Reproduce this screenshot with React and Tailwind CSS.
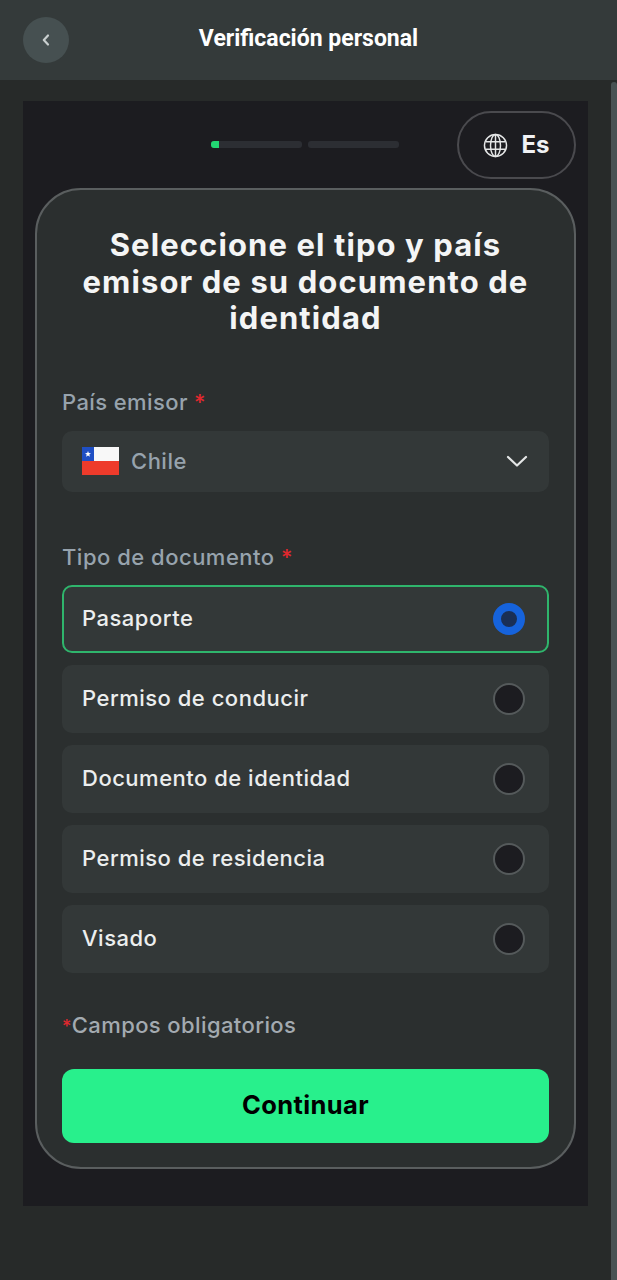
import React from 'react';

const docs = ['Pasaporte', 'Permiso de conducir', 'Documento de identidad', 'Permiso de residencia', 'Visado'];

function ChileFlag() {
  return (
    <svg width="37" height="28" viewBox="0 0 37 28" className="shrink-0">
      <rect width="37" height="14" fill="#f8f8f8" />
      <rect y="14" width="37" height="14" fill="#ee3b2b" />
      <rect width="12" height="14" fill="#1f4fc4" />
      <path d="M6 4l.8 2.1 2.2.1-1.7 1.4.6 2.1L6 8.6l-1.9 1.1.6-2.1L3 6.2l2.2-.1z" fill="#fff" />
    </svg>
  );
}

function GlobeIcon() {
  return (
    <svg width="25" height="25" viewBox="0 0 24 24" fill="none" stroke="#e4e6e6" strokeWidth="1.4">
      <circle cx="12" cy="12" r="10.6" />
      <ellipse cx="12" cy="12" rx="4.8" ry="10.6" />
      <path d="M12 1.4v21.2M2.4 8.4h19.2M2.4 15.6h19.2" />
    </svg>
  );
}

function DocRow({ label, selected }) {
  return (
    <div className={`flex h-[68px] items-center justify-between rounded-[10px] bg-[#333838] ${selected ? 'border-2 border-[#2fb56c] pl-[18px] pr-[22px]' : 'pl-5 pr-6'}`}>
      <span className="text-[22px] font-medium tracking-[0.5px] text-[#eceeee]">{label}</span>
      {selected ? (
        <span className="size-8 rounded-full border-[8px] border-[#1663dc] bg-[#1a2f55]" />
      ) : (
        <span className="size-8 rounded-full border-2 border-[#555a5b] bg-[#1c1c20]" />
      )}
    </div>
  );
}

export default function App() {
  return (
    <div className="relative h-[1280px] overflow-hidden bg-[#272a29] font-['Inter',sans-serif]">
      <header className="relative flex h-20 items-center justify-center bg-[#343a3a]">
        <button className="absolute left-[23px] top-[17px] flex h-[46px] w-[46px] items-center justify-center rounded-full bg-[#465051]">
          <svg width="12" height="14" viewBox="0 0 12 14" fill="none" stroke="#c9cfcf" strokeWidth="2.2" strokeLinecap="round" strokeLinejoin="round">
            <path d="M8 2.5 3.8 7 8 11.5" />
          </svg>
        </button>
        <h1 className="-mt-[2px] font-['Roboto',sans-serif] text-[23px] font-bold text-white">Verificación personal</h1>
      </header>

      <div className="absolute bottom-0 right-0 top-[82px] w-[6px] rounded-t-sm bg-[#485253]" />

      <main className="ml-[23px] mt-[21px] h-[1105px] w-[565px] bg-[#1c1c20] pl-3 pt-[10px]">
        <div className="relative flex h-[67px] w-[541px] items-center">
          <div className="ml-[176px] flex gap-[6px]">
            <div className="h-[7px] w-[91px] overflow-hidden rounded-[3px] bg-[#2c2e33]">
              <div className="h-full w-2 bg-[#22d672]" />
            </div>
            <div className="h-[7px] w-[91px] rounded-[3px] bg-[#2c2e33]" />
          </div>
          <div className="absolute right-0 top-0 flex h-[68px] w-[119px] items-center justify-center gap-[13px] rounded-full border-2 border-[#4a4a4e]">
            <GlobeIcon />
            <span className="text-[24px] font-bold text-[#f0f1f4]">Es</span>
          </div>
        </div>

        <section className="mt-[10px] h-[981px] w-[541px] rounded-[46px] border-2 border-[#5a5e5f] bg-[#2b2f2f] px-[25px] pt-[37px]">
          <h2 className="text-center text-[31px] font-bold leading-[36.5px] tracking-[1.1px] text-[#f4f5f5]">
            Seleccione el tipo y país emisor de su documento de identidad
          </h2>

          <label className="mt-[51px] block text-[22px] font-medium leading-[28px] tracking-[0.4px] text-[#97a3ad]">
            País emisor <span className="text-[#e0282e]">*</span>
          </label>
          <div className="mt-[15px] flex h-[61px] items-center rounded-[10px] bg-[#333838] pl-5 pr-[21px]">
            <ChileFlag />
            <span className="ml-3 text-[22px] font-medium tracking-[0.5px] text-[#97a3ad]">Chile</span>
            <svg className="ml-auto" width="22" height="12" viewBox="0 0 22 12" fill="none" stroke="#e4e6e6" strokeWidth="2.2" strokeLinecap="round" strokeLinejoin="round">
              <path d="M2 2l9 8.5L20 2" />
            </svg>
          </div>

          <label className="mt-[51px] block text-[22px] font-medium leading-[28px] tracking-[0.5px] text-[#97a3ad]">
            Tipo de documento <span className="text-[#e0282e]">*</span>
          </label>
          <div className="mt-[14px] flex flex-col gap-3">
            {docs.map((d, i) => (
              <DocRow key={d} label={d} selected={i === 0} />
            ))}
          </div>

          <p className="mt-[38px] text-[22px] font-medium leading-[28px] tracking-[0.4px] text-[#a3aab0]">
            <span className="text-[18px] text-[#e0282e]">*</span>Campos obligatorios
          </p>

          <button className="mt-[28px] flex h-[74px] w-full items-center justify-center rounded-[12px] bg-[#28f08c] text-[25.5px] font-bold tracking-[0.4px] text-black">
            Continuar
          </button>
        </section>
      </main>
    </div>
  );
}
